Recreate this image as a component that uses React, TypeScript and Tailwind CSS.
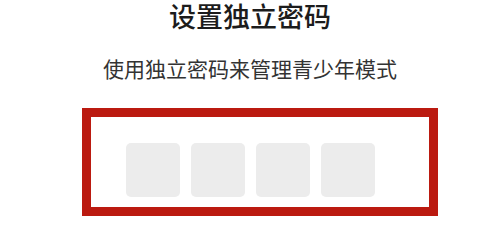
export default function App() {
  const slots = [0, 1, 2, 3]

  return (
    <div
      className="relative w-[500px] h-[237px] bg-white overflow-hidden"
      style={{ fontFamily: '"Noto Sans CJK SC", "Noto Sans", sans-serif' }}
    >
      <div className="flex flex-col items-center">
        <h1 className="text-[27px] leading-[32px] font-medium text-[#1c1c1c]">设置独立密码</h1>
        <p className="mt-[20px] text-[21px] leading-[32px] text-[#333333]">使用独立密码来管理青少年模式</p>

        {/* Code slots */}
        <div className="mt-[59px] flex gap-[11px]">
          {slots.map((i) => (
            <div key={i} className="w-[54px] h-[54px] rounded-[5px] bg-[#ececec]" />
          ))}
        </div>
      </div>

      {/* Highlight frame drawn over the slots */}
      <div className="absolute left-[82px] top-[108px] w-[356px] h-[108px] border-[9px] border-[#bb1a10]" />
    </div>
  )
}
